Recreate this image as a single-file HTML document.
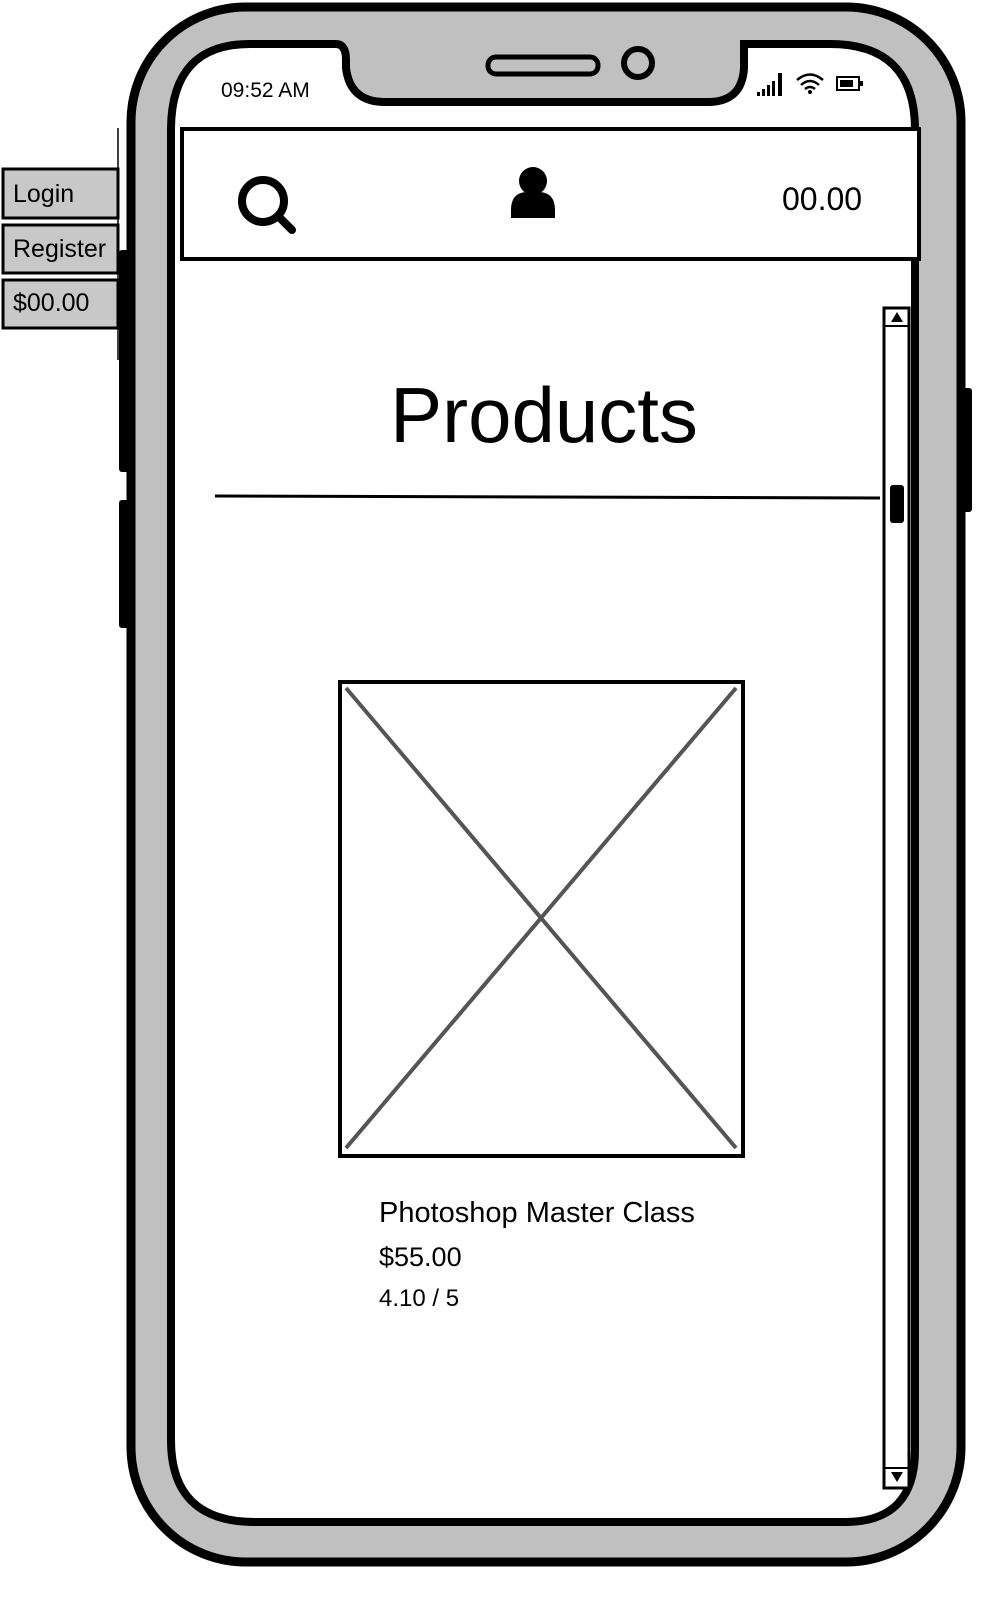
<!DOCTYPE html>
<html><head><meta charset="utf-8"><style>
html,body{margin:0;padding:0;background:#fff;width:990px;height:1600px;overflow:hidden}
svg{display:block}
text{font-family:"Liberation Sans",sans-serif;fill:#000}
</style></head><body>
<svg width="990" height="1600" viewBox="0 0 990 1600">
<rect x="119" y="250" width="12" height="222" rx="3" fill="#000"/>
<rect x="119" y="500" width="12" height="128" rx="3" fill="#000"/>
<rect x="960" y="388" width="12" height="124" rx="3" fill="#000"/>
<line x1="118" y1="128" x2="118" y2="360" stroke="#000" stroke-width="1.5"/>
<rect x="131" y="7" width="830" height="1555" rx="115" fill="#c0c0c0" stroke="#000" stroke-width="9"/>
<path d="M250 44 H336 Q346 44 346 60 V68 Q350 102 385 102 H708 Q742 102 744 68 V44 H830 Q915 44 915 130 V1450 Q915 1522 845 1522 H255 Q171 1522 171 1440 V130 Q171 44 250 44 Z" fill="#fff" stroke="#000" stroke-width="8"/>
<rect x="488" y="57" width="110" height="17" rx="8" fill="none" stroke="#000" stroke-width="5"/>
<ellipse cx="638" cy="63" rx="14" ry="14" fill="none" stroke="#000" stroke-width="6"/>
<text x="221" y="97" font-size="21">09:52 AM</text>
<rect x="757" y="92" width="3" height="4" fill="#000"/><rect x="762" y="89" width="3" height="7" fill="#000"/><rect x="767" y="85" width="3" height="11" fill="#000"/><rect x="772" y="81" width="3" height="15" fill="#000"/><rect x="778" y="73" width="4" height="23" fill="#000"/>
<path d="M797 80 Q810 69 823 80 M801 85 Q810 77 819 85 M805 89 Q810 85 815 89" fill="none" stroke="#000" stroke-width="2.5"/>
<circle cx="810" cy="92" r="2" fill="#000"/>
<rect x="837" y="77" width="22" height="13" fill="none" stroke="#000" stroke-width="2"/><rect x="840" y="80" width="13" height="7" fill="#000"/><rect x="860" y="81" width="3" height="5" fill="#000"/>
<rect x="182" y="129" width="737" height="130" fill="#fff" stroke="#000" stroke-width="4"/>
<circle cx="263" cy="201" r="21" fill="none" stroke="#000" stroke-width="8"/>
<line x1="278" y1="216" x2="292" y2="230" stroke="#000" stroke-width="8" stroke-linecap="round"/>
<circle cx="533" cy="181" r="14" fill="#000"/>
<path d="M511 218 V210 Q511 193 526 192 Q533 197 540 192 Q555 193 555 210 V218 Z" fill="#000"/>
<text x="782" y="210" font-size="32">00.00</text>
<text x="544" y="442" font-size="78" text-anchor="middle">Products</text>
<line x1="215" y1="496" x2="880" y2="498" stroke="#000" stroke-width="3"/>
<rect x="884" y="308" width="25" height="1180" fill="#fff" stroke="#000" stroke-width="3"/>
<line x1="884" y1="326" x2="909" y2="326" stroke="#000" stroke-width="2"/>
<path d="M891 322 L897 312 L903 322 Z" fill="#000"/>
<line x1="884" y1="1468" x2="909" y2="1468" stroke="#000" stroke-width="2"/>
<path d="M891 1472 L897 1482 L903 1472 Z" fill="#000"/>
<rect x="890" y="485" width="14" height="38" rx="3" fill="#000"/>
<rect x="340" y="682" width="403" height="474" fill="#fff" stroke="#000" stroke-width="4"/>
<line x1="346" y1="688" x2="736" y2="1148" stroke="#555" stroke-width="4"/>
<line x1="736" y1="688" x2="346" y2="1148" stroke="#555" stroke-width="4"/>
<text x="379" y="1222" font-size="29">Photoshop Master Class</text>
<text x="379" y="1266" font-size="27">$55.00</text>
<text x="379" y="1306" font-size="24">4.10 / 5</text>
<g stroke="#000" stroke-width="3" fill="#c8c8c8">
<rect x="3" y="169" width="115" height="49"/>
<rect x="3" y="225" width="115" height="48"/>
<rect x="3" y="280" width="115" height="48"/>
</g>
<text x="13" y="202" font-size="25">Login</text>
<text x="13" y="257" font-size="25">Register</text>
<text x="13" y="311" font-size="25">$00.00</text>
</svg>
</body></html>
